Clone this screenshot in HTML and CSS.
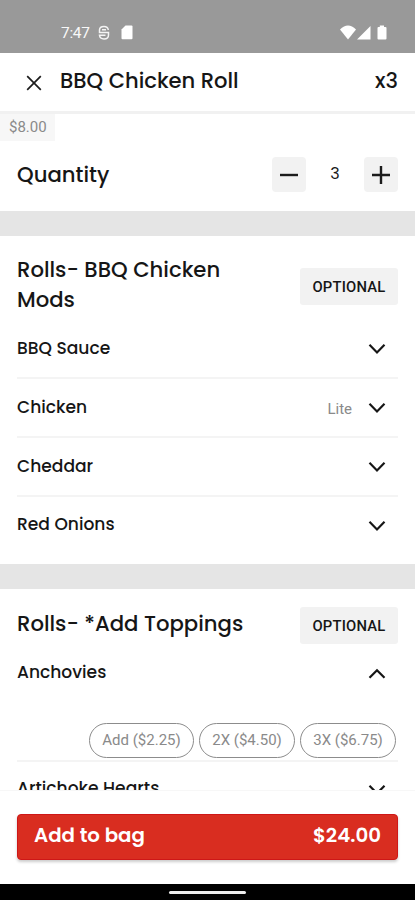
FILE: index.html
```html
<!DOCTYPE html>
<html lang="en">
<head>
<meta charset="utf-8">
<meta name="viewport" content="width=device-width, initial-scale=1">
<title>BBQ Chicken Roll</title>
<link rel="stylesheet" href="styles.css">
</head>
<body>
<div class="screen">
  <div class="status">
    <span class="clock">7:47</span>
    <svg class="s-icon" width="12" height="16" viewBox="0 0 12 16" fill="none" stroke="#f4f4f4" stroke-width="1.5"><path d="M10.300 5C10 2.800 8.300 1.500 6 1.500C3.300 1.500 1.500 3 1.500 5V7.500H10.500V10C10.500 12.500 8.500 14 6 14C3.500 14 1.700 12.500 1.500 10.300H7.500M4 4.700H8"/></svg>
    <svg class="sd-icon" width="12" height="15" viewBox="0 0 12 15" fill="#fff"><path d="M4.500 .5H10.500Q11.500 .5 11.500 1.500V13.300Q11.500 14.300 10.500 14.300H1.500Q.5 14.300 .5 13.300V4.500Z"/></svg>
    <svg class="signal" width="48" height="16" viewBox="0 0 48 16" fill="#fff"><path d="M0 4.500Q8 -3.500 16 4.500L8 14.500Z"/><path d="M30.500 1V14.500H17Z"/><path d="M39.800 .5H44V2H45.500Q46.500 2 46.500 3V13.500Q46.500 14.500 45.500 14.500H38.500Q37.500 14.500 37.500 13.500V3Q37.500 2 38.500 2H39.800Z"/></svg>
  </div>
  <header class="header">
    <svg width="16" height="16" viewBox="0 0 16 16" fill="none" stroke="#1c1c1c" stroke-width="1.7"><path d="M1.200 1.200L14.800 14.800M14.800 1.200L1.200 14.800"/></svg>
    <h1 class="name">BBQ Chicken Roll</h1>
    <span class="count">x3</span>
  </header>
  <main class="content">
    <div class="price">$8.00</div>
    <section class="quantity">
      <h2 class="title qty-title">Quantity</h2>
      <button class="step"><svg width="18" height="18" viewBox="0 0 18 18" stroke="#1c1c1c" stroke-width="2.4"><path d="M0 9H18"/></svg></button>
      <span class="qty">3</span>
      <button class="step"><svg width="18" height="18" viewBox="0 0 18 18" stroke="#1c1c1c" stroke-width="2.4"><path d="M0 9H18M9 0V18"/></svg></button>
    </section>
    <div class="band"></div>
    <section class="group mods">
      <div class="group-head">
        <h2 class="title">Rolls- BBQ Chicken<br>Mods</h2>
        <span class="tag">OPTIONAL</span>
      </div>
      <div class="row"><span class="item">BBQ Sauce</span><svg class="chev" viewBox="0 0 18 12"><path d="M1.500 1.800L9 9.400L16.500 1.800"/></svg></div>
      <div class="row"><span class="item">Chicken</span><span class="choice">Lite</span><svg class="chev" viewBox="0 0 18 12"><path d="M1.500 1.800L9 9.400L16.500 1.800"/></svg></div>
      <div class="row"><span class="item">Cheddar</span><svg class="chev" viewBox="0 0 18 12"><path d="M1.500 1.800L9 9.400L16.500 1.800"/></svg></div>
      <div class="row last"><span class="item">Red Onions</span><svg class="chev" viewBox="0 0 18 12"><path d="M1.500 1.800L9 9.400L16.500 1.800"/></svg></div>
    </section>
    <div class="band"></div>
    <section class="group toppings">
      <div class="group-head">
        <h2 class="title">Rolls- *Add Toppings</h2>
        <span class="tag">OPTIONAL</span>
      </div>
      <div class="row open"><span class="item">Anchovies</span><svg class="chev" viewBox="0 0 18 12"><path d="M1.500 9.800L9 2.200L16.500 9.800"/></svg></div>
      <div class="pills">
        <span class="pill add">Add ($2.25)</span><span class="pill">2X ($4.50)</span><span class="pill">3X ($6.75)</span>
      </div>
      <div class="row last"><span class="item">Artichoke Hearts</span><svg class="chev" viewBox="0 0 18 12"><path d="M1.500 1.800L9 9.400L16.500 1.800"/></svg></div>
    </section>
  </main>
  <footer class="footer">
    <button class="bag"><span>Add to bag</span><span>$24.00</span></button>
  </footer>
  <div class="nav"><div class="handle"></div></div>
</div>
</body>
</html>
```
FILE: styles.css
```css
* { box-sizing: border-box; }
body { margin: 0; background: #fff; color: #161616; font-family: Poppins, Inter, sans-serif; }
h1, h2 { margin: 0; font-weight: 500; }
button { border: 0; padding: 0; font-family: inherit; }
svg { display: block; flex: none; }
.screen { width: 415px; height: 900px; display: flex; flex-direction: column; overflow: hidden; }
.status { height: 53px; flex: none; background: #999; display: flex; align-items: flex-start; padding: 25px 27px 0 61px; color: #f8f8f8; }
.clock { width: 37px; font: 400 15.500px/16px Roboto, sans-serif; letter-spacing: -.3px; }
.sd-icon { margin-left: 11px; }
.signal { margin-left: auto; }
.header { height: 58px; flex: none; display: flex; align-items: center; padding: 0 17px 0 26px; }
.header svg { margin-top: 1px; }
.name { margin-left: 18px; font-size: 21.100px; line-height: 30px; margin-top: -3px; }
.count { margin: -3px 0 0 auto; font-size: 21px; font-weight: 500; line-height: 30px; }
.content { flex: 1; min-height: 0; overflow: hidden; border-top: 3px solid #f1f1f1; }
.price { width: 55px; height: 27px; padding-left: 9px; background: #f7f7f7; color: #8a8a8a; font: 400 15px/27px Roboto, sans-serif; }
.quantity { height: 70px; padding: 16px 17px 0 17px; display: flex; align-items: flex-start; }
.title { font-size: 21.200px; line-height: 29.500px; }
.qty-title { flex: 1; line-height: 35px; }
.step { width: 34px; height: 35px; border-radius: 4px; background: #f2f2f2; display: flex; align-items: center; justify-content: center; }
.qty { width: 58px; text-align: center; font-size: 16px; line-height: 33px; }
.band { height: 25px; background: #e5e5e5; }
.group { padding: 0 17px; }
.mods { height: 328px; }
.group-head { display: flex; justify-content: space-between; align-items: flex-start; }
.mods .group-head { height: 84px; padding-top: 19px; }
.toppings .group-head { height: 56px; padding-top: 20px; }
.tag { width: 98px; height: 37px; border-radius: 3px; background: #f2f2f2; text-align: center; font: 500 14.800px/39px Roboto, sans-serif; letter-spacing: .2px; }
.mods .tag { margin-top: 13px; }
.toppings .tag { margin-top: -2px; }
.row { height: 59px; border-bottom: 2px solid #f4f4f4; display: flex; align-items: center; padding: 0 12px 1px 0; }
.row.last, .row.open { border: 0; padding-bottom: 4px; }
.item { flex: 1; margin-top: -1px; font-size: 17.100px; font-weight: 500; line-height: 24px; }
.row .chev { width: 18px; height: 12px; margin-top: 2px; fill: none; stroke: #161616; stroke-width: 2.200; }
.choice { margin-right: 16px; padding-top: 3px; color: #8a8a8a; font: 400 15px/20px Roboto, sans-serif; }
.pills { height: 58px; padding: 19px 2px 0 0; border-bottom: 2px solid #f4f4f4; display: flex; gap: 5px; justify-content: flex-end; }
.pill { width: 96px; height: 35px; border: 1px solid #8c8c8c; border-radius: 18px; text-align: center; color: #8a8a8a; font: 400 15px/33px Roboto, sans-serif; }
.pill.add { width: 105px; }
.toppings .row.last { padding-bottom: 6px; }
.footer { height: 94px; flex: none; padding: 23px 17px 0; border-top: 1px solid #f7f7f7; }
.bag { width: 381px; height: 46px; display: flex; justify-content: space-between; padding: 0 16px; border: 1px solid #ce1717; border-radius: 4px; background: #d92d20; box-shadow: 0 2px 3px #0003; color: #fff; font-size: 19.800px; font-weight: 600; line-height: 40px; }
.nav { height: 16px; flex: none; background: #000; padding-top: 7px; }
.handle { width: 77px; height: 3px; margin: 0 auto; border-radius: 2px; background: #eee; }
```
